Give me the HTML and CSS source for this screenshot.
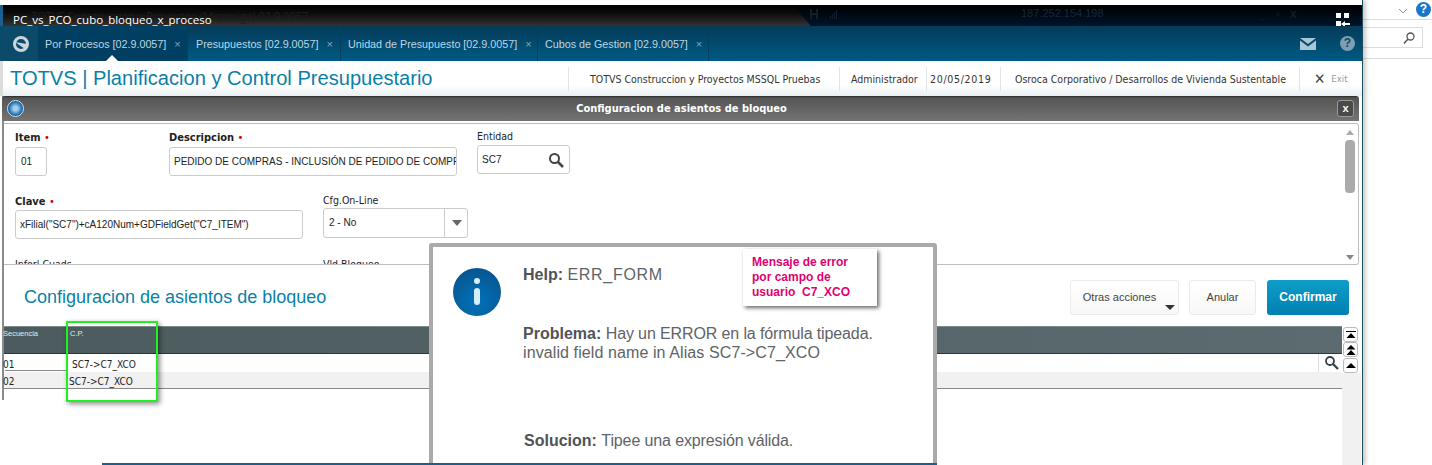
FILE: index.html
```html
<!doctype html>
<html>
<head>
<meta charset="UTF-8">
<title>Configuracion de asientos de bloqueo</title>
<link rel="stylesheet" href="styles.css">
</head>
<body>
<div class="screen">
	<div class="app">
		<!--remote session bar-->
		<div class="remote-bar">
			<span class="ghost">TOTVS Construccion y Proyectos (Microsiga) 02.9.0057</span>
			<span class="doc-name">PC_vs_PCO_cubo_bloqueo_x_proceso</span>
			<span class="ip">187.252.154.198</span>
			<span class="dim-tools">_ &nbsp; ▫ &nbsp; x</span>
			<svg class="signal" width="30" height="10" viewBox="0 0 30 10"><path fill="#0e1f2d" d="M0 0h2v10H0zM6 0h2v10H6zM2 4h4v2H2zM20 7h1v3h-1zM22 5h1v5h-1zM24 3h1v7h-1zM26 1h1v9h-1z"/></svg>
			<svg class="snap" width="16" height="16" viewBox="0 0 16 16"><path fill="#fff" d="M1 0h5v5H1zM9 0h5v5H9zM1 8h5v5H1zM15 10H10V8l-4 3 4 3v-2h5z"/></svg>
		</div>
		<!--tabs-->
		<div class="tabs">
			<div class="tabs-logo">
				<svg width="18" height="18" viewBox="0 0 18 18"><circle cx="9" cy="9" r="6.5" fill="none" stroke="#c9d6dd" stroke-width="3"/><path d="M3 7l12 2-2 5z" fill="#c9d6dd"/></svg>
			</div>
			<div class="tab tab-on">Por Procesos [02.9.0057]<i>×</i></div>
			<div class="tab">Presupuestos [02.9.0057]<i>×</i></div>
			<div class="tab">Unidad de Presupuesto [02.9.0057]<i>×</i></div>
			<div class="tab">Cubos de Gestion [02.9.0057]<i>×</i></div>
			<div class="tabs-tools">
				<svg width="16" height="12" viewBox="0 0 16 12"><path fill="#a9c6d6" d="M0 0h16L8 6zM0 2.500l8 6 8-6V12H0z"/></svg>
				<span class="help-dot">?</span>
			</div>
		</div>
		<!--head-->
		<div class="head">
			<h1>TOTVS | Planificacion y Control Presupuestario</h1>
			<div class="head-info head-company">TOTVS Construccion y Proyectos MSSQL Pruebas</div>
			<div class="head-info head-user">Administrador</div>
			<div class="head-info head-date">20/05/2019</div>
			<div class="head-info head-branch">Osroca Corporativo / Desarrollos de Vivienda Sustentable</div>
			<div class="head-info head-exit"><b>✕</b>Exit</div>
		</div>
		<!--dialog-->
		<div class="dialog">
			<div class="dialog-title">
				<span class="dialog-icon"></span>
				<span class="dialog-name">Configuracion de asientos de bloqueo</span>
				<span class="dialog-close">x</span>
			</div>
			<div class="form">
				<div class="form-row row-one">
					<div class="field f-item"><label class="req">Item <em>•</em></label><div class="inp">01</div></div>
					<div class="field f-desc"><label class="req">Descripcion <em>•</em></label><div class="inp">PEDIDO DE COMPRAS - INCLUSIÓN DE PEDIDO DE COMPR</div></div>
					<div class="field f-ent"><label>Entidad</label><div class="inp inp-search">SC7
						<svg width="16" height="16" viewBox="0 0 16 16"><circle cx="6.500" cy="6.500" r="4.500" fill="none" stroke="#444" stroke-width="2"/><path d="M10 10l5 5" stroke="#444" stroke-width="2.500"/></svg>
					</div></div>
				</div>
				<div class="form-row row-two">
					<div class="field f-key"><label class="req">Clave <em>•</em></label><div class="inp">xFilial("SC7")+cA120Num+GDFieldGet("C7_ITEM")</div></div>
					<div class="field f-cfg"><label>Cfg.On-Line</label><div class="inp inp-select">2 - No<span class="sel-arrow"></span></div></div>
				</div>
				<div class="form-row row-three">
					<div class="field f-key"><label>Inforl Cuads</label></div>
					<div class="field f-cfg"><label>Vld.Bloqueo</label></div>
				</div>
				<div class="scroll">
					<span class="scroll-up"></span>
					<span class="scroll-thumb"></span>
					<span class="scroll-down"></span>
				</div>
			</div>
			<div class="actions">
				<h2>Configuracion de asientos de bloqueo</h2>
				<div class="btns">
					<a class="btn btn-more">Otras acciones<span></span></a>
					<a class="btn btn-cancel">Anular</a>
					<a class="btn btn-ok">Confirmar</a>
				</div>
			</div>
			<div class="grid-area">
				<div class="grid">
					<div class="grid-head"><span class="c1">Secuencia</span><span class="c2">C.P.</span></div>
					<div class="grid-row"><span class="c1">01</span><span class="c2 shift">SC7-&gt;C7_XCO</span>
						<span class="grid-find"><svg width="16" height="16" viewBox="0 0 16 16"><circle cx="6" cy="6" r="4" fill="none" stroke="#33424a" stroke-width="1.800"/><path d="M9 9l5 5" stroke="#33424a" stroke-width="2.300"/></svg></span>
					</div>
					<div class="grid-row grid-alt"><span class="c1">02</span><span class="c2">SC7-&gt;C7_XCO</span></div>
				</div>
				<div class="grid-side">
					<span class="side-btn"><svg width="10" height="8" viewBox="0 0 10 8"><path d="M0 0h10v1H0zM5 2l4.500 5H.5z"/></svg></span>
					<span class="side-btn"><svg width="10" height="10" viewBox="0 0 10 10"><path d="M5 0l4.500 4.500H.5zM5 5l4.500 5H.5z"/></svg></span>
					<span class="side-btn side-last"><svg width="10" height="5" viewBox="0 0 10 5"><path d="M5 0l5 5H0z"/></svg></span>
				</div>
			</div>
		</div>
	</div>
	<!--browser sliver on the right-->
	<div class="browser">
		<div class="browser-top">
			<svg width="10" height="6" viewBox="0 0 10 6"><path d="M1 1l4 4 4-4" fill="none" stroke="#999"/></svg>
			<span class="browser-help">?</span>
		</div>
		<div class="browser-bar">
			<div class="browser-search">
				<svg width="14" height="14" viewBox="0 0 14 14"><circle cx="8.500" cy="5.500" r="3.500" fill="none" stroke="#555" stroke-width="1.300"/><path d="M6 8l-4 4.500" stroke="#555" stroke-width="1.500"/></svg>
			</div>
		</div>
	</div>

	<!--things pasted over the screen-->
	<div class="green-box"></div>
	<div class="modal">
		<div class="modal-icon">
			<svg width="48" height="48" viewBox="0 0 48 48"><circle cx="24" cy="13" r="3" fill="#d6eef9"/><rect x="21" y="20" width="6" height="17" rx="3" fill="#d6eef9"/></svg>
		</div>
		<p class="m-help"><b>Help:</b> <span class="wide">ERR_FORM</span></p>
		<p class="m-prob"><b>Problema:</b> <span class="tight">Hay un ERROR en la fórmula tipeada.</span><br><span class="loose">invalid field name in Alias SC7-&gt;C7_XCO</span></p>
		<p class="m-sol"><b>Solucion:</b> <span class="tight">Tipee una expresión válida.</span></p>
	</div>
	<div class="callout">Mensaje de error<br>por campo de<br>usuario&nbsp; C7_XCO</div>
	<div class="blue-line"></div>
</div>
</body>
</html>
```

FILE: styles.css
```css
*{margin:0;padding:0;box-sizing:border-box;}
body{background:#fff;font-family:"Liberation Sans",Arial,sans-serif;font-size:12px;overflow:hidden;}
/*screen*/
.screen{width:1432px;height:465px;position:relative;display:flex;overflow:hidden;background:#fff;}
.app{width:1363px;height:465px;padding-top:5px;flex:none;border-right:1px solid #1d4d63;box-shadow:3px 0 4px rgba(0,0,0,.2);position:relative;}
/*remote bar*/
.remote-bar{height:21px;background:linear-gradient(#000 0%,#0c0c0c 40%,#333 100%);position:relative;overflow:hidden;border-left:3px solid #1b5f90;}
.remote-bar:after{content:"";position:absolute;left:790px;top:0;width:580px;height:21px;background:linear-gradient(#000,#00142a);clip-path:polygon(0 0,100% 0,100% 100%,18px 100%);}
.ghost{position:absolute;left:28px;top:3px;color:#1e1e1e;font-family:"Open Sans",sans-serif;font-size:12px;transform:scaleX(.92);transform-origin:left;}
.doc-name{position:absolute;left:10px;top:7px;color:#fff;font-family:"Open Sans",sans-serif;font-size:11.5px;line-height:15px;white-space:nowrap;z-index:2;}
.ip{position:absolute;left:1018px;top:2px;color:#10283c;font-size:11px;z-index:2;}
.dim-tools{position:absolute;left:1256px;top:2px;color:#0e1f2d;font-size:12px;font-weight:700;z-index:2;}
.signal{position:absolute;left:807px;top:4px;z-index:2;}
.snap{position:absolute;left:1332px;top:8px;z-index:2;}
/*tabs*/
.tabs{height:35px;display:flex;align-items:center;background:linear-gradient(#053a58,#005b85);}
.tabs-logo{width:38px;height:35px;display:flex;align-items:center;justify-content:center;padding-left:4px;background:#0b4a68;}
.tab{height:35px;display:flex;align-items:center;padding:0 0 0 7px;color:#bcd6e3;font-size:10.750px;white-space:nowrap;border-right:1px solid #04405f;position:relative;}
.tab i{font-style:normal;font-size:11px;color:#7fa8bd;margin-left:8px;}
.tab-on{background:#003f62;width:150px;}
.tab-on:after{content:"";position:absolute;left:68px;bottom:0;border:6px solid transparent;border-top:0;border-bottom:6px solid #fff;}
.tab:nth-child(3){width:153px;padding-left:8px;}
.tab:nth-child(4){width:197px;}
.tab:nth-child(5){width:171px;}
.tabs-tools{margin-left:auto;display:flex;align-items:center;gap:24px;padding-right:7px;}
.help-dot{width:15px;height:15px;border-radius:50%;background:#7d9fb1;color:#0b4a68;font-weight:700;font-size:12px;line-height:15px;text-align:center;}
/*head*/
.head{height:35px;display:flex;align-items:center;background:linear-gradient(#fff 70%,#e8eef2);border-left:3px solid #ddd;}
.head h1{width:565px;padding-left:7px;font-size:20.100px;font-weight:400;color:#0b7fa8;white-space:nowrap;}
.head-info{height:24px;line-height:24px;font-family:"DejaVu Sans",sans-serif;font-stretch:condensed;font-size:10.500px;color:#333;white-space:nowrap;border-left:1px solid #dfe5e8;}
.head-company{width:271px;padding-left:21px;}
.head-user{width:87px;padding-left:11px;}
.head-date{width:74px;padding-left:3px;letter-spacing:.7px;}
.head-branch{width:299px;padding-left:14px;}
.head-exit{padding-left:14px;color:#999;display:flex;align-items:center;gap:6px;font-size:9.500px;}
.head-exit b{color:#444;font-size:15px;}
/*dialog*/
.dialog{margin-left:2px;border-left:2px solid #8a8a8a;height:304px;}
.dialog-title{height:25px;margin-left:-2px;margin-right:3px;display:flex;align-items:center;justify-content:center;position:relative;background:linear-gradient(#2a2a2a 0,#555 8%,#747474 100%);border-radius:3px 3px 0 0;}
.dialog-name{font-family:"DejaVu Sans",sans-serif;font-stretch:condensed;font-weight:700;font-size:11px;color:#fff;margin-left:2px;}
.dialog-icon{position:absolute;left:5px;top:4px;width:17px;height:17px;border-radius:50%;background:radial-gradient(circle,#9fd0ee 20%,#0a5aa0 70%);border:1px solid #cfe3f0;}
.dialog-close{position:absolute;right:5px;top:4px;width:17px;height:17px;border:1px solid #999;border-radius:3px;background:#4a4a4a;color:#fff;font-weight:700;font-size:11px;line-height:14px;text-align:center;}
/*form*/
.form{height:142px;margin:2px 3px 0 0;padding:0 0 0 11px;border:1px solid #bdbdbd;border-left:0;border-radius:0 3px 3px 0;overflow:hidden;position:relative;background:#fff;}
.form-row{display:flex;}
.row-one{padding-top:5px;height:65px;align-items:flex-start;}
.row-two{height:68px;padding-top:4px;}
.field label{display:block;font-family:"DejaVu Sans",sans-serif;font-stretch:condensed;font-size:10.500px;line-height:14px;color:#222;white-space:nowrap;}
.field label.req{font-weight:700;font-size:11px;}
.field label em{font-style:normal;color:#c00;font-weight:400;}
.inp{height:29px;line-height:27px;padding:0 4px;border:1px solid #ccc;border-radius:3px;background:#fff;font-size:10px;color:#222;white-space:nowrap;overflow:hidden;}
.f-item{width:32px;margin-right:122px;padding-top:2px;}
.f-item .inp{padding-left:5px;margin-top:2px;}
.f-desc{width:288px;margin-right:20px;padding-top:2px;}
.f-desc .inp{margin-top:2px;}
.f-ent{width:93px;}
.f-ent label{margin-bottom:2px;}
.inp-search{display:flex;align-items:center;justify-content:space-between;padding-right:5px;}
.f-key{width:288px;margin-right:20px;padding-top:2px;}
.f-key .inp{margin-top:1px;}
.row-three .f-key{padding-top:0;}
.f-cfg{width:145px;}
.f-cfg label{margin-bottom:1px;}
.inp-select{height:30px;line-height:28px;position:relative;padding-left:5px;}
.sel-arrow{position:absolute;right:0;top:0;width:23px;height:28px;border-left:1px solid #ccc;}
.sel-arrow:after{content:"";position:absolute;left:7px;top:11px;border:5px solid transparent;border-top:6px solid #666;border-bottom:0;}
.scroll{position:absolute;right:3px;top:0;width:10px;height:140px;display:flex;flex-direction:column;align-items:center;padding-top:6px;}
.scroll-up{border:4px solid transparent;border-top:0;border-bottom:5px solid #aaa;}
.scroll-thumb{width:10px;height:53px;margin-top:5px;background:#aaa;border-radius:4px;}
.scroll-down{margin-top:auto;margin-bottom:4px;border:4px solid transparent;border-bottom:0;border-top:5px solid #888;}
/*actions*/
.actions{height:61px;display:flex;justify-content:space-between;padding:15px 13px 0 20px;}
.actions h2{font-size:18px;font-weight:400;color:#0b7fa8;line-height:35px;white-space:nowrap;}
.btns{display:flex;gap:10px;}
.btn{height:35px;line-height:33px;border:1px solid #ebebeb;border-radius:3px;font-size:11px;color:#444;text-align:center;background:linear-gradient(#fff,#f8f8f8);position:relative;}
.btn-more{width:109px;padding-right:10px;}
.btn-more span{position:absolute;right:3px;bottom:4px;border:5px solid transparent;border-top:5px solid #333;border-bottom:0;}
.btn-cancel{width:67px;}
.btn-ok{width:82px;margin-left:1px;border:0;line-height:35px;color:#fff;font-size:12px;font-weight:700;background:linear-gradient(#0f9dc8,#0080b2);}
/*grid*/
.grid-area{display:flex;height:139px;}
.grid{width:1338px;flex:none;}
.grid-head{height:28px;background:linear-gradient(90deg,#4c5c5e,#5c6b6f);border-top:1px solid #7d898b;border-bottom:1px solid #333;display:flex;color:#e4eaea;font-size:7.500px;line-height:11px;padding-top:1px;}
.c1{width:65px;margin-left:-1px;flex:none;}
.grid-row{height:18px;display:flex;align-items:center;padding-top:2px;font-family:"DejaVu Sans",sans-serif;font-stretch:condensed;font-size:10px;color:#222;position:relative;}
.grid-row .c1{box-shadow:0 3px 0 -2px #888;}
.grid-head .c2{padding-left:2px;}
.shift{padding-left:4px;}
.grid-find{position:absolute;right:0;top:0;height:18px;width:24px;border-left:1px solid #ddd;padding:1px 0 0 5px;}
.grid-alt{height:17px;background:#f1f1f1;border-bottom:1px solid #888;}
.grid-alt .c1{box-shadow:none;}
.grid-alt .c2{padding-left:1px;}
.grid-side{width:19px;flex:none;background:linear-gradient(#fff 47px,#f1f1f1 47px);padding:1px 0 0 1px;display:flex;flex-direction:column;}
.side-btn{width:15px;height:15px;border:1px solid #bbb;border-radius:3px;background:#fff;display:flex;align-items:center;justify-content:center;}
.side-last{margin-top:1px;}
/*browser*/
.browser{flex:1;min-width:0;}
.browser-top{height:20px;border-bottom:1px solid #ddd;display:flex;align-items:flex-start;padding:8px 0 0 35px;gap:8px;}
.browser-help{width:15px;height:15px;margin-top:-6px;border-radius:50%;background:#1b75c9;color:#fff;font-weight:700;font-size:12px;line-height:15px;text-align:center;}
.browser-bar{height:39px;padding-top:7px;border-bottom:1px solid #ddd;}
.browser-search{height:21px;width:60px;border:1px solid #ddd;border-left:0;display:flex;align-items:center;justify-content:flex-end;padding-right:6px;}
/*overlays*/
.green-box{position:absolute;left:66px;top:321px;width:92px;height:81px;border:2px solid #1ef21e;box-shadow:2px 2px 5px rgba(0,0,0,.45);z-index:3;}
.modal{position:absolute;left:429px;top:243px;width:508px;height:240px;background:#fff;border:4px solid #aaa;border-radius:3px;z-index:4;color:#606367;font-size:16px;line-height:19px;}
.modal p{position:absolute;left:90px;white-space:nowrap;}
.modal b{color:#505357;}
.wide{letter-spacing:.7px;}
.tight{letter-spacing:-.12px;}
.loose{letter-spacing:.1px;}
.m-help{top:18px;}
.m-prob{top:77px;}
.m-sol{top:184px;left:91px !important;}
.modal-icon{position:absolute;left:20px;top:21px;width:48px;height:48px;border-radius:50%;background:radial-gradient(circle at 50% 70%,#0072bb,#0a4f85);}
.callout{position:absolute;left:743px;top:249px;width:134px;height:57px;padding:6px 9px;background:#fff;box-shadow:2px 2px 4px rgba(0,0,0,.6);color:#e2006f;font-size:12px;font-weight:700;line-height:15px;z-index:5;}
.blue-line{position:absolute;left:102px;top:463px;width:835px;height:2px;background:#1b5f8c;z-index:6;}
```
